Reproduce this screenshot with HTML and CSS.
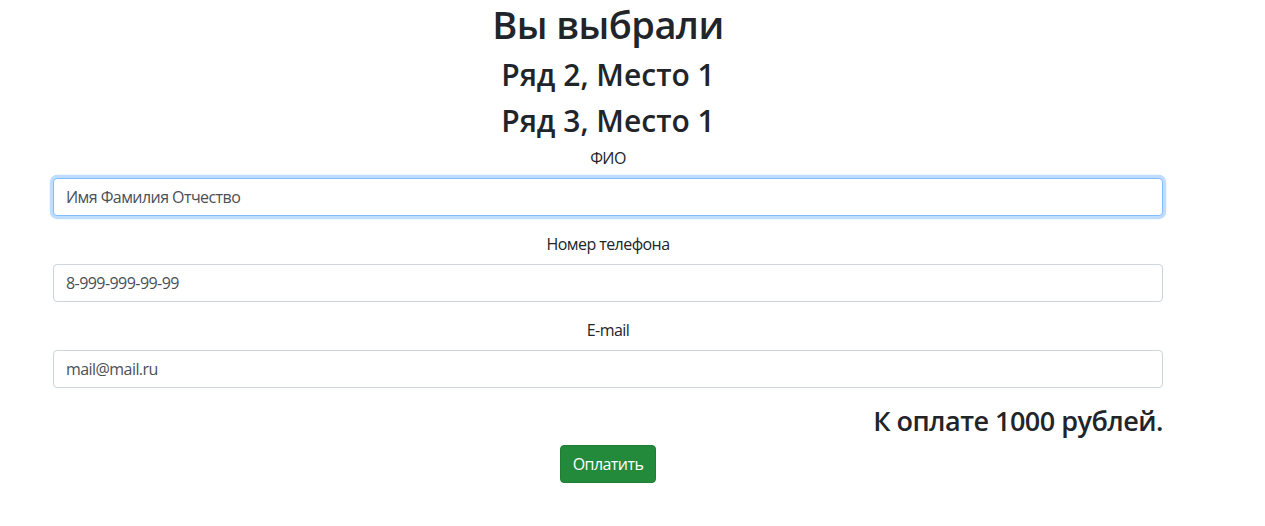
FILE: index.html
```html
<!DOCTYPE html>
<html lang="ru">
<head>
<meta charset="utf-8">
<title>Оплата</title>
<link rel="stylesheet" href="styles.css">
</head>
<body>
<div class="container">
  <h1 class="title">Вы выбрали</h1>
  <h2 class="seat">Ряд 2, Место 1</h2>
  <h2 class="seat seat-last">Ряд 3, Место 1</h2>
  <form class="form">
    <div class="form-group">
      <label class="label" for="fio">ФИО</label>
      <input class="form-control focused" id="fio" type="text" placeholder="Имя Фамилия Отчество">
    </div>
    <div class="form-group">
      <label class="label" for="phone">Номер телефона</label>
      <input class="form-control" id="phone" type="text" placeholder="8-999-999-99-99">
    </div>
    <div class="form-group">
      <label class="label" for="mail">E-mail</label>
      <input class="form-control" id="mail" type="text" placeholder="mail@mail.ru">
    </div>
    <h3 class="total">К оплате 1000 рублей.</h3>
    <div class="actions">
      <button class="btn-pay" type="button">Оплатить</button>
    </div>
  </form>
</div>
</body>
</html>
```
FILE: styles.css
```css
html, body {
  margin: 0;
  padding: 0;
  background: #fff;
}
body {
  font-family: "Open Sans", "Noto Sans", "Liberation Sans", sans-serif;
  font-size: 16px;
  line-height: 1.5;
  color: #212529;
  letter-spacing: -0.035em;
}
.container {
  width: 1110px;
  margin-left: 53px;
}
.title, .seat, .total {
  margin: 0 0 8px 0;
  font-weight: 600;
  text-align: center;
  color: #212529;
}
.title {
  font-size: 38px;
  line-height: 48px;
  letter-spacing: -0.015em;
}
.seat {
  font-size: 30px;
  line-height: 38.4px;
  letter-spacing: 0;
}
.seat-last { margin-bottom: 5px; }
.total {
  font-size: 27px;
  line-height: 33.6px;
  text-align: right;
  letter-spacing: -0.019em;
}
.form-group {
  margin-bottom: 16px;
  text-align: center;
}
.label {
  display: inline-block;
  margin-bottom: 8px;
}
.form-control {
  display: block;
  box-sizing: border-box;
  width: 100%;
  height: 38px;
  padding: 6px 12px;
  font-family: inherit;
  font-size: 16px;
  letter-spacing: -0.035em;
  line-height: 1.5;
  color: #495057;
  background: #fff;
  border: 1px solid #ced4da;
  border-radius: 4px;
  outline: none;
}
.form-control::placeholder {
  color: #495057;
  opacity: 1;
}
.form-control.focused {
  border-color: #80bdff;
  box-shadow: 0 0 0 3.2px rgba(0, 123, 255, 0.25);
}
.actions {
  text-align: center;
}
.btn-pay {
  display: inline-block;
  height: 38px;
  padding: 6px 12px;
  font-family: inherit;
  font-size: 16px;
  letter-spacing: -0.035em;
  line-height: 1.5;
  color: #fff;
  background: #228a3a;
  border: 1px solid #1e7e34;
  border-radius: 4px;
  cursor: pointer;
}
```
